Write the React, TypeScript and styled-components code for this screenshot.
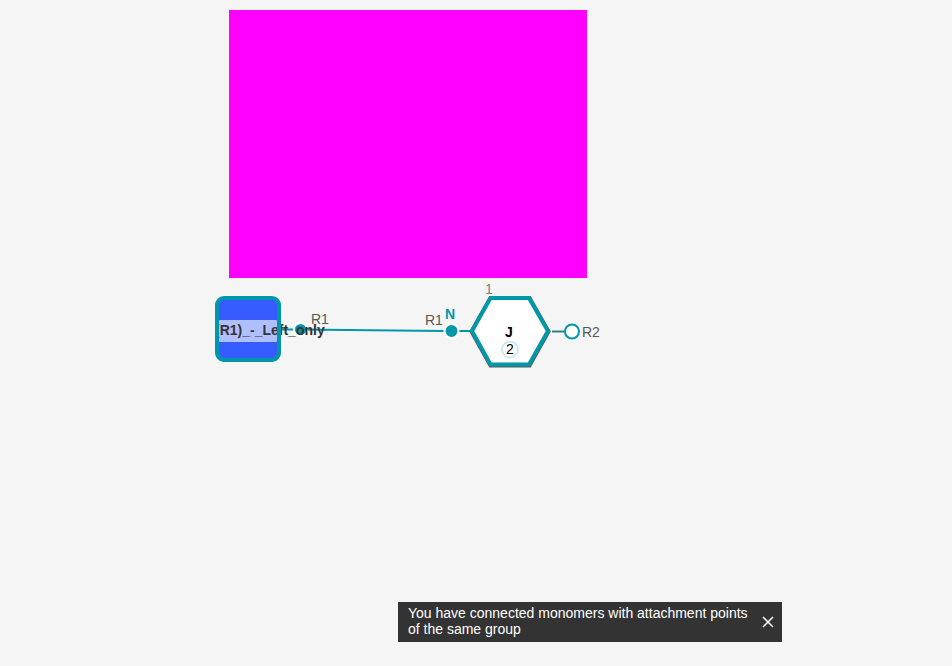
import React from "react";
import styled, { createGlobalStyle } from "styled-components";

const GlobalStyle = createGlobalStyle`
  * { box-sizing: border-box; }
  body {
    margin: 0;
    background: #f5f5f5;
    font-family: "Liberation Sans", Arial, sans-serif;
    font-size: 14px;
  }
`;

const Page = styled.div`
  display: flex;
  flex-direction: column;
  justify-content: space-between;
  min-height: 100vh;
  padding: 10px 0 24px;
`;

const Editor = styled.main`
  display: flex;
  flex-direction: column;
  align-items: center;
  padding-right: 136px;
`;

const Preview = styled.div`
  width: 358px;
  max-width: 100%;
  aspect-ratio: 358 / 268;
  background: #ff00ff;
`;

const Diagram = styled.svg`
  display: block;
  width: 386px;
  height: 92px;
  overflow: visible;
`;

const Bond = styled.path`
  fill: none;
  stroke: #0097a8;
  stroke-width: 2px;
`;

const Point = styled.circle<{ $free?: boolean }>`
  fill: ${(p) => (p.$free ? "#ffffff" : "#0097a8")};
  stroke: ${(p) => (p.$free ? "#0097a8" : "#ffffff")};
  stroke-width: 2px;
`;

const Label = styled.text<{ $color?: string; $bold?: boolean; $center?: boolean }>`
  fill: ${(p) => p.$color ?? "#585858"};
  font-size: 14px;
  font-weight: ${(p) => (p.$bold ? 700 : 400)};
  text-anchor: ${(p) => (p.$center ? "middle" : "start")};
`;

const ToastArea = styled.div`
  display: flex;
  justify-content: center;
  padding-left: 228px;
`;

const Toast = styled.div`
  display: flex;
  align-items: center;
  justify-content: space-between;
  width: 384px;
  padding: 0 8px 0 10px;
  background: #333333;
  color: #ffffff;
`;

const Message = styled.p`
  max-width: 348px;
  margin: 0;
  padding: 3px 0 5px;
  line-height: 16px;
`;

const CloseButton = styled.button`
  display: flex;
  flex-shrink: 0;
  padding: 0;
  border: 0;
  background: none;
  color: inherit;
  cursor: pointer;
`;

export default function App() {
  return (
    <Page>
      <GlobalStyle />
      <Editor>
        <Preview />
        <Diagram viewBox="215 278 386 92" role="img" aria-label="Connected monomers">
          <rect x="217" y="298" width="62" height="62" rx="6" fill="#365cff" />
          <rect x="219" y="320" width="58" height="22" rx="1" fill="#b0bfff" />
          <Bond d="M281 329.5H293M300 329.5L444 331M459 331H471" />
          <Point cx="300.5" cy="329.5" r="6.5" />
          <Label x="311" y="324">R1</Label>
          <Label x="215" y="335" $color="#333333" $bold>(R1)_-_Left_only</Label>
          <rect x="217" y="298" width="62" height="62" rx="7" fill="none" stroke="#0097a8" strokeWidth="4" />

          <Point cx="451.5" cy="331" r="7" />
          <Label x="425" y="325">R1</Label>
          <Label x="450" y="319" $color="#0097a8" $bold $center>N</Label>
          <Label x="485" y="294" $color="#7c7c7c">1</Label>

          <path d="M490.5 298H529.5L548.5 331.5L529.5 365.5H490.5L471.5 331.5Z" fill="#ffffff" stroke="#585858" strokeWidth="4" />
          <path d="M490.5 298H529L548 331L529 364.5H490.5L472 331Z" fill="#ffffff" stroke="#0097a8" strokeWidth="4" />
          <Label x="509" y="337" $color="#000000" $bold $center>J</Label>
          <circle cx="510" cy="349.5" r="8" fill="#ffffff" stroke="#cdeaed" strokeWidth="2" />
          <Label x="510" y="354" $color="#000000" $center>2</Label>

          <path d="M552 331.5H565" stroke="#2e7e89" strokeWidth="2" />
          <Point cx="572" cy="331.5" r="7" $free />
          <Label x="582" y="337">R2</Label>
        </Diagram>
      </Editor>
      <ToastArea>
        <Toast role="status">
          <Message>You have connected monomers with attachment points of the same group</Message>
          <CloseButton type="button" aria-label="Close">
            <svg width="12" height="12" viewBox="0 0 12 12" fill="none" stroke="currentColor" strokeWidth="1.5">
              <path d="M1 1L11 11M11 1L1 11" />
            </svg>
          </CloseButton>
        </Toast>
      </ToastArea>
    </Page>
  );
}
